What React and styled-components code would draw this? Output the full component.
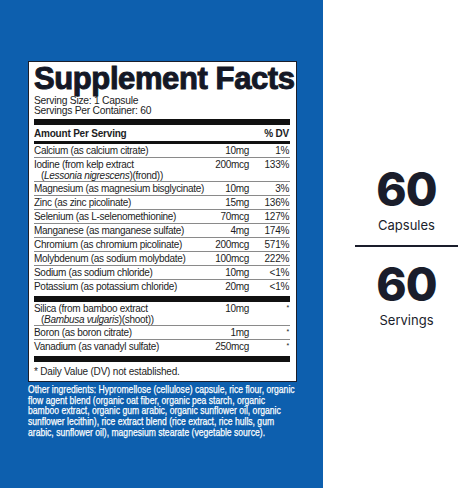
import React from "react";
import styled, { createGlobalStyle } from "styled-components";

const GlobalStyle = createGlobalStyle`
  html, body {
    margin: 0;
    padding: 0;
    background: #ffffff;
  }
  * {
    box-sizing: border-box;
  }
`;

const nutrients = [
  { name: "Calcium (as calcium citrate)", amount: "10mg", dv: "1%" },
  {
    name: "Iodine (from kelp extract",
    sub: (
      <>
        (<i>Lessonia nigrescens</i>)(frond))
      </>
    ),
    amount: "200mcg",
    dv: "133%",
  },
  { name: "Magnesium (as magnesium bisglycinate)", amount: "10mg", dv: "3%" },
  { name: "Zinc (as zinc picolinate)", amount: "15mg", dv: "136%" },
  { name: "Selenium (as L-selenomethionine)", amount: "70mcg", dv: "127%" },
  { name: "Manganese (as manganese sulfate)", amount: "4mg", dv: "174%" },
  { name: "Chromium (as chromium picolinate)", amount: "200mcg", dv: "571%" },
  { name: "Molybdenum (as sodium molybdate)", amount: "100mcg", dv: "222%" },
  { name: "Sodium (as sodium chloride)", amount: "10mg", dv: "<1%" },
  { name: "Potassium (as potassium chloride)", amount: "20mg", dv: "<1%" },
];

const extras = [
  {
    name: "Silica (from bamboo extract",
    sub: (
      <>
        (<i>Bambusa vulgaris</i>)(shoot))
      </>
    ),
    amount: "10mg",
    dv: "*",
  },
  { name: "Boron (as boron citrate)", amount: "1mg", dv: "*" },
  { name: "Vanadium (as vanadyl sulfate)", amount: "250mcg", dv: "*" },
];

const otherLines = [
  "Other ingredients: Hypromellose (cellulose) capsule, rice flour, organic",
  "flow agent blend (organic oat fiber, organic pea starch, organic",
  "bamboo extract, organic gum arabic, organic sunflower oil, organic",
  "sunflower lecithin), rice extract blend (rice extract, rice hulls, gum",
  "arabic, sunflower oil), magnesium stearate (vegetable source).",
];

const NutrientRow = ({ item, last }) => (
  <Row $last={last}>
    <Name>
      {item.name}
      {item.sub && <Sub>{item.sub}</Sub>}
    </Name>
    <Amount>{item.amount}</Amount>
    <Dv $star={item.dv === "*"}>{item.dv}</Dv>
  </Row>
);

const App = () => {
  return (
    <>
      <GlobalStyle />
      <Page>
        <BluePanel>
          <FactsBox>
            <Title>Supplement Facts</Title>
            <ServingText>Serving Size: 1 Capsule</ServingText>
            <ServingText>Servings Per Container: 60</ServingText>
            <Bar $size={6} />
            <HeaderRow>
              <span>Amount Per Serving</span>
              <span>% DV</span>
            </HeaderRow>
            <Bar $size={3} />
            {nutrients.map((n, i) => (
              <NutrientRow
                key={n.name}
                item={n}
                last={i === nutrients.length - 1}
              />
            ))}
            <Bar $size={6} />
            {extras.map((n, i) => (
              <NutrientRow
                key={n.name}
                item={n}
                last={i === extras.length - 1}
              />
            ))}
            <Bar $size={6} />
            <Footnote>* Daily Value (DV) not established.</Footnote>
          </FactsBox>
          <Other>
            {otherLines.map((l) => (
              <OtherLine key={l}>{l}</OtherLine>
            ))}
          </Other>
        </BluePanel>
        <SidePanel>
          <Stat>
            <Big>60</Big>
            <Label>Capsules</Label>
          </Stat>
          <Divider />
          <Stat>
            <Big>60</Big>
            <Label>Servings</Label>
          </Stat>
        </SidePanel>
      </Page>
    </>
  );
};

export default App;

const Page = styled.div`
  width: 458px;
  height: 488px;
  display: grid;
  grid-template-columns: 323px 1fr;
  overflow: hidden;
`;

const BluePanel = styled.div`
  background: #0d5fae;
  padding: 61px 26px 0 28px;
`;

const FactsBox = styled.div`
  background: #ffffff;
  border: 1px solid #1b1e2a;
  padding: 1px 6px 3px 5px;
  font-family: "Liberation Sans", Arial, sans-serif;
  color: #1c1d24;
`;

const Title = styled.div`
  font-size: 31px;
  line-height: 31px;
  font-weight: 700;
  letter-spacing: -0.4px;
  color: #141826;
  -webkit-text-stroke: 1px #141826;
  white-space: nowrap;
  margin-bottom: 2px;
`;

const ServingText = styled.div`
  font-size: 10.3px;
  line-height: 10px;
  letter-spacing: -0.25px;
`;

const Bar = styled.div`
  height: ${(p) => p.$size}px;
  background: #111111;
  margin-top: ${(p) => (p.$size === 6 ? 3 : 0)}px;
`;

const HeaderRow = styled.div`
  display: flex;
  justify-content: space-between;
  font-size: 10px;
  line-height: 12px;
  font-weight: 700;
  letter-spacing: -0.2px;
  padding: 3px 1px 1px 0;
`;

const Row = styled.div`
  display: grid;
  grid-template-columns: minmax(0, 1fr) 60px 41px;
  font-size: 10px;
  line-height: 12px;
  letter-spacing: -0.3px;
  padding-top: 1px;
  border-bottom: ${(p) => (p.$last ? "none" : "1px solid #8a8a8a")};
`;

const Name = styled.div`
  white-space: nowrap;
`;

const Sub = styled.div`
  padding-left: 7px;
  line-height: 10px;
`;

const Amount = styled.div`
  text-align: right;
`;

const Dv = styled.div`
  text-align: right;
  padding-right: 1px;
  font-size: ${(p) => (p.$star ? "7px" : "10px")};
  line-height: ${(p) => (p.$star ? "9px" : "12px")};
`;

const Footnote = styled.div`
  font-size: 10px;
  line-height: 12px;
  letter-spacing: -0.2px;
  padding-top: 4px;
`;

const Other = styled.div`
  padding-top: 2px;
  width: 345px;
  transform: scaleX(0.78);
  transform-origin: left top;
  font-family: "Liberation Sans", Arial, sans-serif;
  font-size: 11px;
  line-height: 10.7px;
  color: #ffffff;
  -webkit-text-stroke: 0.25px #ffffff;
`;

const OtherLine = styled.div`
  white-space: nowrap;
`;

const SidePanel = styled.div`
  background: #ffffff;
  padding: 161px 0 0 32px;
  display: flex;
  flex-direction: column;
  align-items: stretch;
  font-family: Inter, "Open Sans", sans-serif;
  color: #1a1d2b;
`;

const Stat = styled.div`
  display: flex;
  flex-direction: column;
  align-items: center;
`;

const Big = styled.div`
  font-size: 46px;
  line-height: 56px;
  font-weight: 800;
  letter-spacing: -1px;
`;

const Label = styled.div`
  font-size: 13px;
  line-height: 16px;
`;

const Divider = styled.div`
  height: 2px;
  background: #1a1d2b;
  margin: 12px 0 9px;
`;
